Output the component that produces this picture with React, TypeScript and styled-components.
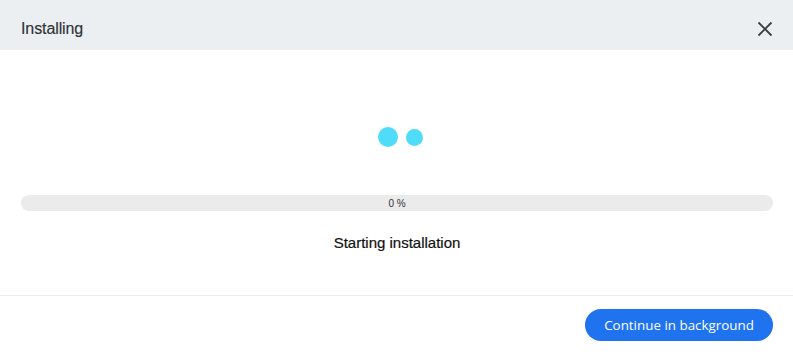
import React from "react";
import styled, { createGlobalStyle } from "styled-components";

const GlobalStyle = createGlobalStyle`
  html, body {
    margin: 0;
    padding: 0;
    background: #ffffff;
  }
  * {
    box-sizing: border-box;
  }
`;

const Dialog = styled.div`
  display: flex;
  flex-direction: column;
  width: 793px;
  height: 362px;
  background: #fff;
  font-family: "Liberation Sans", Arial, sans-serif;
  color: #1c1c1c;
`;

const Header = styled.header`
  display: flex;
  align-items: center;
  justify-content: space-between;
  height: 50px;
  padding: 8px 20px 0 21px;
  background: #eceff2;
`;

const Title = styled.h2`
  margin: 0;
  font-size: 16px;
  font-weight: normal;
  color: #2e3236;
  letter-spacing: -0.1px;
  -webkit-text-stroke: 0.15px #2e3236;
`;

const CloseButton = styled.button`
  display: flex;
  align-items: center;
  justify-content: center;
  width: 16px;
  height: 16px;
  padding: 0;
  border: none;
  background: transparent;
  cursor: pointer;

  svg {
    width: 16px;
    height: 16px;
  }
`;

const Body = styled.main`
  flex: 1;
  display: flex;
  flex-direction: column;
  align-items: stretch;
  padding: 76px 20px 0 21px;
`;

const Loader = styled.div`
  display: flex;
  align-items: center;
  justify-content: center;
  gap: 8px;
  height: 22px;
  margin-left: 7px;
`;

const Dot = styled.span<{ $size: number }>`
  display: block;
  width: ${(p) => p.$size}px;
  height: ${(p) => p.$size}px;
  border-radius: 50%;
  background: #4fdcf9;
`;

const Track = styled.div`
  display: flex;
  align-items: center;
  justify-content: center;
  height: 16px;
  margin-top: 47px;
  border-radius: 8px;
  background: #ebebeb;
  overflow: hidden;
`;

const Percent = styled.span`
  font-size: 10px;
  color: #333;
`;

const Status = styled.p`
  margin: 23px 0 0;
  text-align: center;
  font-size: 15px;
  color: #111;
  -webkit-text-stroke: 0.2px #111;
`;

const Footer = styled.footer`
  display: flex;
  justify-content: flex-end;
  align-items: flex-start;
  height: 67px;
  padding: 13px 20px 0;
  border-top: 1px solid #ededed;
`;

const PrimaryButton = styled.button`
  height: 32px;
  padding: 0 19px;
  border: none;
  border-radius: 16px;
  background: #1f73ef;
  color: #fff;
  font-family: "Open Sans", "Noto Sans", sans-serif;
  font-size: 13.4px;
  cursor: pointer;
`;

export default function App() {
  const progress = 0;
  return (
    <>
      <GlobalStyle />
      <Dialog>
        <Header>
          <Title>Installing</Title>
          <CloseButton aria-label="Close">
            <svg viewBox="0 0 16 16" fill="none" stroke="#3a3d40" strokeWidth="1.8">
              <path d="M1.5 1.5 L14.5 14.5 M14.5 1.5 L1.5 14.5" />
            </svg>
          </CloseButton>
        </Header>
        <Body>
          <Loader>
            <Dot $size={20} />
            <Dot $size={17} />
          </Loader>
          <Track>
            <Percent>{progress} %</Percent>
          </Track>
          <Status>Starting installation</Status>
        </Body>
        <Footer>
          <PrimaryButton>Continue in background</PrimaryButton>
        </Footer>
      </Dialog>
    </>
  );
}
